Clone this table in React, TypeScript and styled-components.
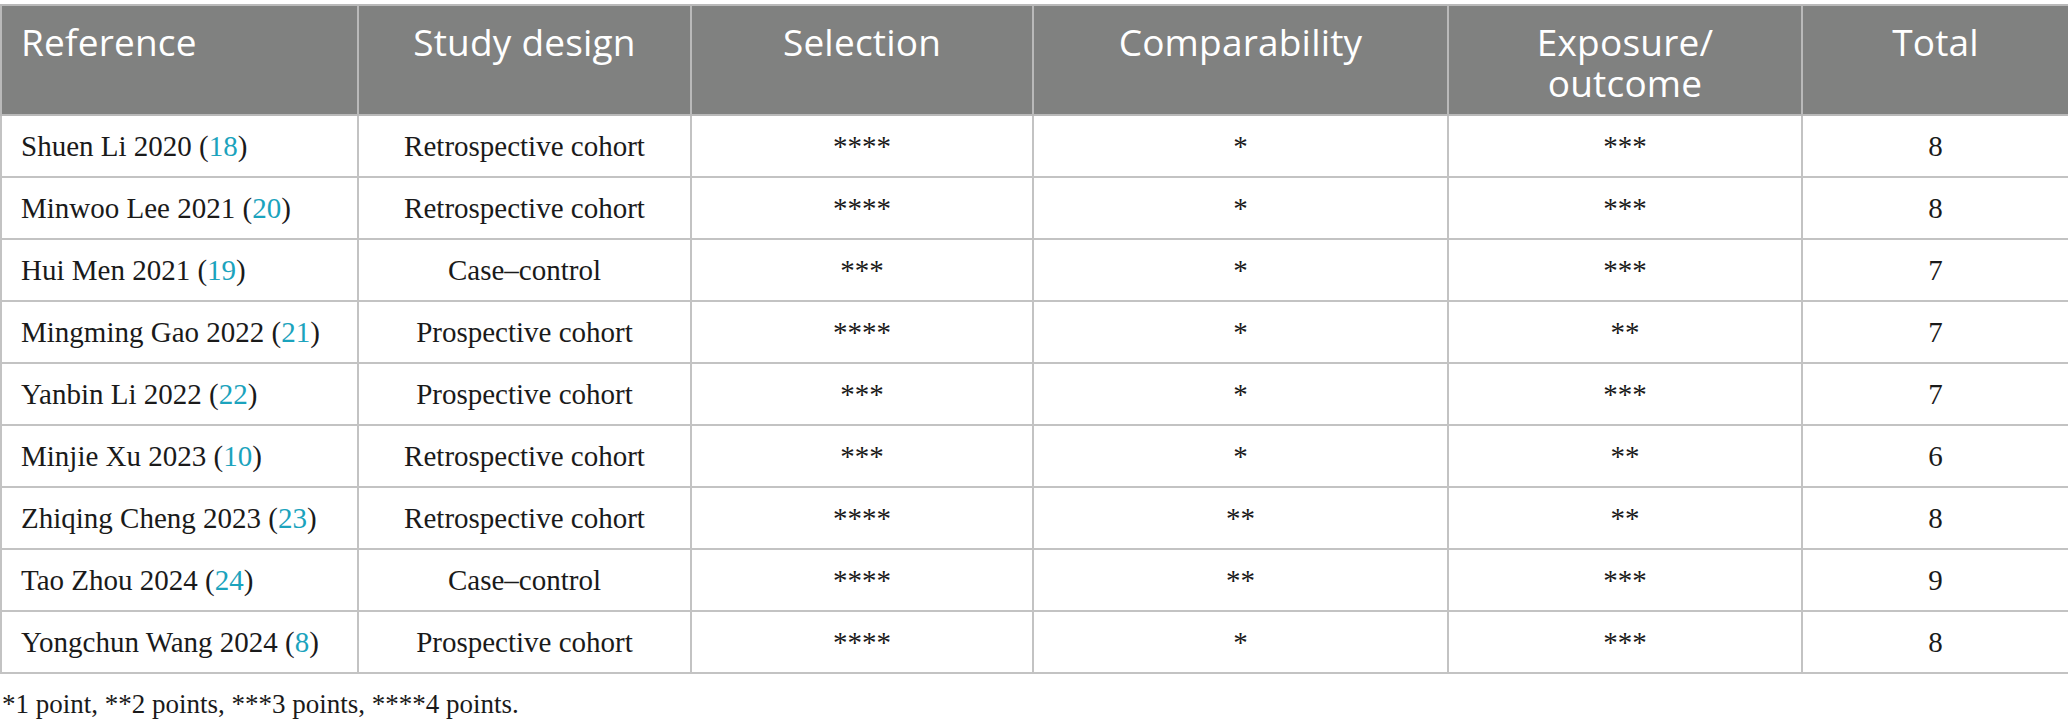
import React from "react";
import styled, { createGlobalStyle } from "styled-components";

const Global = createGlobalStyle`
  html, body { margin: 0; padding: 0; background: #ffffff; }
  body { font-family: "Liberation Serif", serif; }
`;

const Page = styled.div`
  width: 2068px;
  padding-top: 4px;
  box-sizing: border-box;
`;

const Table = styled.table`
  width: 2068px;
  border-collapse: collapse;
  table-layout: fixed;
`;

const HeadCell = styled.th<{ $align?: string }>`
  background: #808180;
  color: #ffffff;
  font-family: "Open Sans", sans-serif;
  font-weight: 400;
  font-size: 37px;
  line-height: 41px;
  letter-spacing: 0.2px;
  text-align: ${(p) => p.$align || "center"};
  vertical-align: top;
  padding: 15px 19px 0;
  height: 110px;
  box-sizing: border-box;
  border: 2px solid #b9b9b9;
`;

const Row = styled.tr`
  height: 62px;
`;

const Cell = styled.td<{ $align?: string }>`
  font-family: "Liberation Serif", serif;
  font-size: 29px;
  color: #1a1a1a;
  text-align: ${(p) => p.$align || "center"};
  vertical-align: middle;
  padding: 0 19px;
  border: 2px solid #c3c3c3;
`;

const Ref = styled.span`
  color: #1ba3bd;
`;

const Footnote = styled.div`
  font-family: "Liberation Serif", serif;
  font-size: 27px;
  color: #1a1a1a;
  padding: 15px 0 0 2px;
`;

type Study = {
  author: string;
  ref: string;
  design: string;
  sel: string;
  comp: string;
  exp: string;
  total: number;
};

const data: Study[] = [
  { author: "Shuen Li 2020", ref: "18", design: "Retrospective cohort", sel: "****", comp: "*", exp: "***", total: 8 },
  { author: "Minwoo Lee 2021", ref: "20", design: "Retrospective cohort", sel: "****", comp: "*", exp: "***", total: 8 },
  { author: "Hui Men 2021", ref: "19", design: "Case–control", sel: "***", comp: "*", exp: "***", total: 7 },
  { author: "Mingming Gao 2022", ref: "21", design: "Prospective cohort", sel: "****", comp: "*", exp: "**", total: 7 },
  { author: "Yanbin Li 2022", ref: "22", design: "Prospective cohort", sel: "***", comp: "*", exp: "***", total: 7 },
  { author: "Minjie Xu 2023", ref: "10", design: "Retrospective cohort", sel: "***", comp: "*", exp: "**", total: 6 },
  { author: "Zhiqing Cheng 2023", ref: "23", design: "Retrospective cohort", sel: "****", comp: "**", exp: "**", total: 8 },
  { author: "Tao Zhou 2024", ref: "24", design: "Case–control", sel: "****", comp: "**", exp: "***", total: 9 },
  { author: "Yongchun Wang 2024", ref: "8", design: "Prospective cohort", sel: "****", comp: "*", exp: "***", total: 8 },
];

const widths = [357, 333, 342, 415, 354, 267];

export default function App() {
  return (
    <Page>
      <Global />
      <Table>
        <colgroup>
          {widths.map((w, i) => (
            <col key={i} style={{ width: w }} />
          ))}
        </colgroup>
        <thead>
          <tr>
            <HeadCell $align="left">Reference</HeadCell>
            <HeadCell>Study design</HeadCell>
            <HeadCell>Selection</HeadCell>
            <HeadCell>Comparability</HeadCell>
            <HeadCell>
              Exposure/
              <br />
              outcome
            </HeadCell>
            <HeadCell>Total</HeadCell>
          </tr>
        </thead>
        <tbody>
          {data.map((d) => (
            <Row key={d.author}>
              <Cell $align="left">
                {d.author} (<Ref>{d.ref}</Ref>)
              </Cell>
              <Cell>{d.design}</Cell>
              <Cell>{d.sel}</Cell>
              <Cell>{d.comp}</Cell>
              <Cell>{d.exp}</Cell>
              <Cell>{d.total}</Cell>
            </Row>
          ))}
        </tbody>
      </Table>
      <Footnote>*1 point, **2 points, ***3 points, ****4 points.</Footnote>
    </Page>
  );
}
